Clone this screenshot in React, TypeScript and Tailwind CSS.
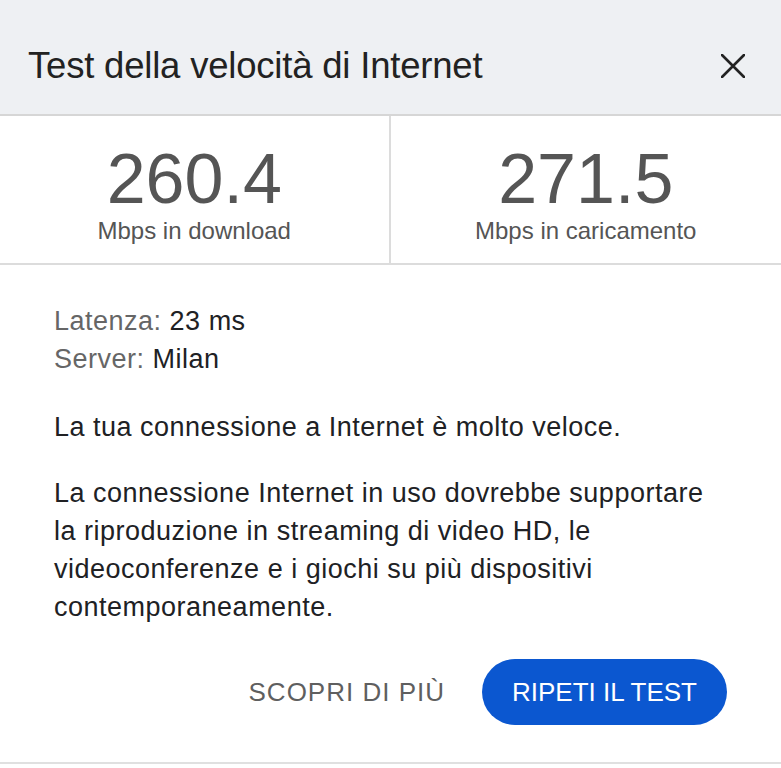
const stats = [
  { value: '260.4', label: 'Mbps in download' },
  { value: '271.5', label: 'Mbps in caricamento' },
]

export default function App() {
  return (
    <div className="h-[768px] w-[781px] overflow-hidden bg-white font-['Liberation_Sans',Arial,sans-serif] text-[#202124]">
      <header className="flex h-[116px] items-center justify-between border-b-2 border-[#d6d6d6] bg-[#eef0f3] pl-[28px] pr-[36px] pt-[18px]">
        <h1 className="text-[36.5px] leading-none tracking-[-0.2px] text-[#222]">Test della velocità di Internet</h1>
        <svg width="24" height="24" viewBox="0 0 24 24" className="text-[#222]">
          <path d="M1 1L23 23M23 1L1 23" stroke="currentColor" strokeWidth="2.6" strokeLinecap="round" />
        </svg>
      </header>

      <div className="grid h-[149px] grid-cols-2 border-b-2 border-[#dcdcdc]">
        {stats.map((s, i) => (
          <div
            key={s.label}
            className={`flex flex-col items-center justify-center pt-[6px] text-[#555] ${i === 0 ? 'border-r-2 border-[#dcdcdc]' : ''}`}
          >
            <span className="text-[70px] leading-[70px]">{s.value}</span>
            <span className="mt-[6px] text-[24px] leading-[22px]">{s.label}</span>
          </div>
        ))}
      </div>

      <div className="px-[54px] pt-[37px] text-[27px] leading-[38px] tracking-[0.5px]">
        <p>
          <span className="text-[#666]">Latenza:</span> 23 ms
        </p>
        <p>
          <span className="text-[#666]">Server:</span> Milan
        </p>
        <p className="mt-[30px]">La tua connessione a Internet è molto veloce.</p>
        <p className="mt-[28px]">
          La connessione Internet in uso dovrebbe supportare
          <br />
          la riproduzione in streaming di video HD, le
          <br />
          videoconferenze e i giochi su più dispositivi
          <br />
          contemporaneamente.
        </p>
      </div>

      <div className="mt-[33px] flex items-center justify-end gap-[37px] pr-[54px]">
        <button className="text-[26px] tracking-[1px] text-[#5f5f5f]">SCOPRI DI PIÙ</button>
        <button className="h-[66px] w-[245px] rounded-full bg-[#0b57d0] text-[26px] text-white">
          RIPETI IL TEST
        </button>
      </div>

      <div className="mt-[37px] border-b-2 border-[#e0e0e0]" />
    </div>
  )
}
